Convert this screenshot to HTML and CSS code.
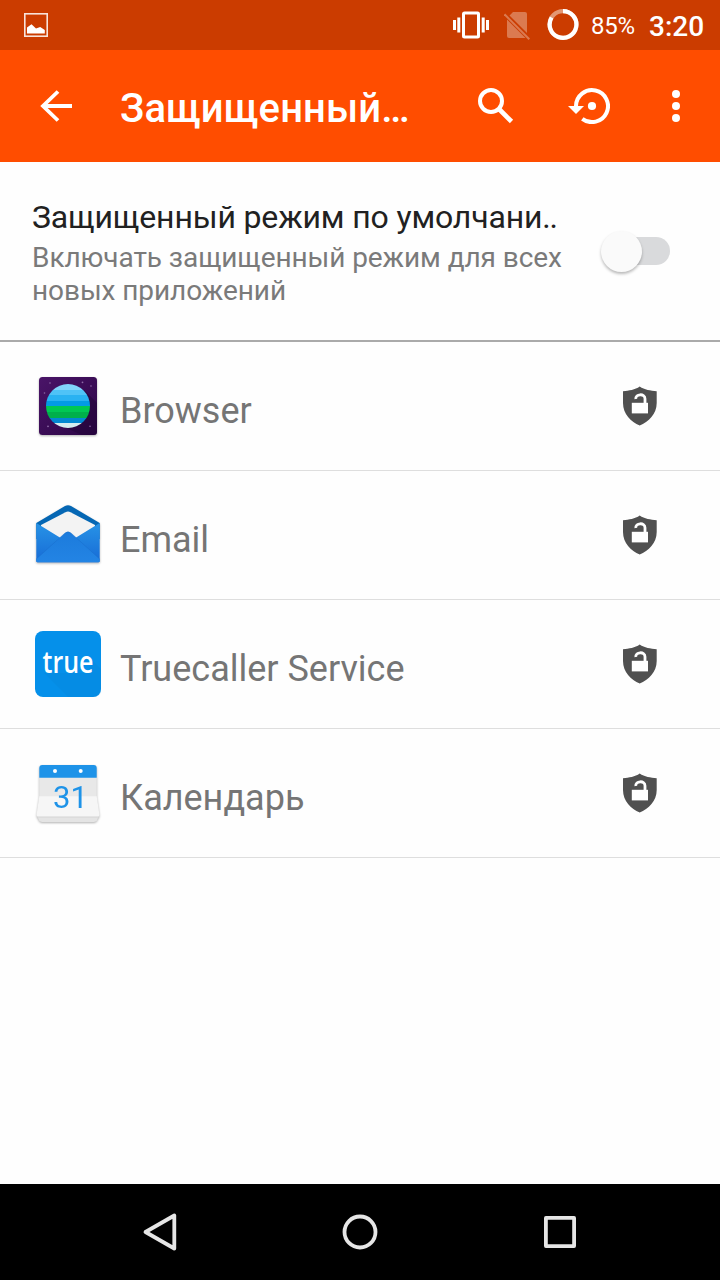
FILE: index.html
```
<!DOCTYPE html>
<html lang="ru">
<head>
    <meta charset="UTF-8">
    <meta name="viewport" content="width=device-width, initial-scale=1.0">
    <title>Защищенный режим</title>
    <link rel="stylesheet" href="styles.css">
</head>
<body>
    <!-- shield icon shared by all rows -->
    <svg class="defs" width="0" height="0">
        <symbol id="shield" viewBox="0 0 36 40">
            <path fill="#505050" d="M17.700 .6C22.500 4 28.500 4.800 34.700 5.200V17C34.700 28 26.500 36 17.700 39.400C9 36 1 28 1 17V5.200C7 4.800 13 4 17.700 .6Z"/>
            <rect x="9.800" y="16.800" width="16.200" height="10.600" fill="#fff"/>
            <path fill="none" stroke="#fff" stroke-width="2.800" d="M13.800 13C13 8 23 6.800 23 12.800V17"/>
        </symbol>
    </svg>

    <div class="screen">
        <div class="status-bar">
            <svg class="status-image" width="24" height="24" viewBox="0 0 24 24">
                <rect x=".8" y=".8" width="22.400" height="22.400" fill="none" stroke="#f8e3da" stroke-width="1.600"/>
                <path fill="#fff" d="M3 20.500V14.500L7.500 11.300L12 15.500L16.200 14L20.800 17V20.500Z"/>
            </svg>
            <svg class="status-vibrate" width="36" height="30" viewBox="0 0 36 30" fill="#fff">
                <rect x="10.500" y="3" width="15" height="24" rx="1" fill="none" stroke="#fff" stroke-width="3"/>
                <rect x="0" y="10" width="3" height="10"/>
                <rect x="4.300" y="7.500" width="3" height="15"/>
                <rect x="28.700" y="7.500" width="3" height="15"/>
                <rect x="33" y="10" width="3" height="10"/>
            </svg>
            <svg class="status-sim" width="26" height="30" viewBox="0 0 26 30">
                <path fill="#db7a50" d="M9 2H21Q23 2 23 4V23L5.500 5.500ZM3 9.500L21.500 28H5Q3 28 3 26Z"/>
                <path stroke="#db7a50" stroke-width="2" d="M.5 4.300L25.300 29.300"/>
            </svg>
            <svg class="status-battery" width="32" height="32" viewBox="0 0 32 32" fill="none" stroke-width="4.200">
                <circle cx="16" cy="15.500" r="13.400" stroke="#e39773"/>
                <path stroke="#fff" d="M16 2.100A13.400 13.400 0 1 1 4.600 8.500"/>
            </svg>
            <span class="battery-text">85%</span>
            <span class="clock">3:20</span>
        </div>

        <div class="toolbar">
            <svg class="back" width="32" height="36" viewBox="0 0 32 36" fill="none" stroke="#fff" stroke-width="4">
                <path d="M32 18H3M18 3.500L3 18L18 32.500" stroke-width="3.800"/>
            </svg>
            <h1>Защищенный…</h1>
            <svg class="search" width="36" height="36" viewBox="0 0 36 36" fill="none" stroke="#fff">
                <circle cx="13" cy="13" r="11" stroke-width="4"/>
                <path stroke-width="4.600" d="M21.500 21.500L33.500 33.500"/>
            </svg>
            <svg class="restore" width="42" height="36" viewBox="0 0 42 36">
                <path fill="none" stroke="#fff" stroke-width="4" d="M8 18A16 16 0 1 1 14.300 30.800"/>
                <path fill="#fff" d="M0 18H16L8 26Z"/>
                <circle cx="24" cy="18" r="4.100" fill="#fff"/>
            </svg>
            <svg class="more" width="8" height="36" viewBox="0 0 8 36" fill="#fff">
                <circle cx="4" cy="6" r="4"/>
                <circle cx="4" cy="18" r="4"/>
                <circle cx="4" cy="30" r="4"/>
            </svg>
        </div>

        <div class="setting">
            <div class="setting-text">
                <h2>Защищенный режим по умолчани<span class="dots">..</span></h2>
                <p>Включать защищенный режим для всех новых приложений</p>
            </div>
            <div class="switch"><div class="thumb"></div></div>
        </div>

        <ul class="app-list">
            <li>
                <svg class="app-icon" viewBox="0 0 72 72">
                    <defs>
                        <clipPath id="planet"><circle cx="36" cy="36" r="22"/></clipPath>
                        <linearGradient id="sky" x1="0" y1="0" x2="1" y2="1">
                            <stop offset="0" stop-color="#4a1468"/>
                            <stop offset="1" stop-color="#2c0645"/>
                        </linearGradient>
                    </defs>
                    <rect x="7" y="7" width="58" height="58" rx="3.500" fill="url(#sky)"/>
                    <path fill="#23053a" opacity=".6" d="M52 20L65 33V62Q65 65 62 65H50L21 52Z"/>
                    <g clip-path="url(#planet)">
                        <rect x="14" y="14" width="44" height="6" fill="#81d4fa"/>
                        <rect x="14" y="20" width="44" height="5" fill="#4fc3f7"/>
                        <rect x="14" y="25" width="44" height="6" fill="#29b2f2"/>
                        <rect x="14" y="31" width="44" height="5" fill="#039be5"/>
                        <rect x="14" y="36" width="44" height="6" fill="#00c853"/>
                        <rect x="14" y="42" width="44" height="6" fill="#00b04a"/>
                        <rect x="14" y="48" width="44" height="5" fill="#0288d1"/>
                        <rect x="14" y="53" width="44" height="5" fill="#d3ecef"/>
                    </g>
                    <g fill="#8d6aa6">
                        <circle cx="18" cy="13" r=".8"/>
                        <circle cx="50.500" cy="12.300" r=".9"/>
                        <circle cx="59" cy="16" r=".8"/>
                        <circle cx="12.500" cy="23" r=".8"/>
                        <circle cx="16" cy="56.300" r=".9"/>
                        <circle cx="58" cy="56.300" r=".8"/>
                    </g>
                </svg>
                <span class="app-name">Browser</span>
                <svg class="shield"><use href="#shield"/></svg>
            </li>
            <li>
                <svg class="app-icon" viewBox="0 0 72 72">
                    <defs>
                        <linearGradient id="envelope" x1="0" y1="0" x2="0" y2="1">
                            <stop offset="0" stop-color="#2793e6"/>
                            <stop offset="1" stop-color="#176bd6"/>
                        </linearGradient>
                        <linearGradient id="flap" x1="0" y1="0" x2="0" y2="1">
                            <stop offset="0" stop-color="#1c7bdc"/>
                            <stop offset="1" stop-color="#2384e4"/>
                        </linearGradient>
                    </defs>
                    <path fill="#0567b4" d="M4.300 24L33 7Q36 5.300 39 7L67.700 24V40H4.300Z"/>
                    <path fill="#f3f3f3" d="M9 26L33.500 13.200Q36 12 38.500 13.200L63 26V45H9Z"/>
                    <path fill="url(#envelope)" d="M4.300 24L36 43.500L67.700 24V62Q67.700 63.300 66.400 63.300H5.600Q4.300 63.300 4.300 62Z"/>
                    <path fill="url(#flap)" d="M4.300 60L33 34Q36 31.500 39 34L67.700 60V62Q67.700 63.300 66.400 63.300H5.600Q4.300 63.300 4.300 62Z"/>
                    <path fill="none" stroke="#1769c8" stroke-width=".4" d="M4.300 60L33 34Q36 31.500 39 34L67.700 60"/>
                </svg>
                <span class="app-name">Email</span>
                <svg class="shield"><use href="#shield"/></svg>
            </li>
            <li>
                <svg class="app-icon flat" viewBox="0 0 72 72">
                    <rect x="3" y="3" width="66" height="66" rx="8" fill="#0590ea"/>
                    <path fill="#0787db" d="M61 33L69 41V61Q69 69 61 69H36L12 45H55Z" opacity=".35"/>
                    <text class="true-text" x="10.500" y="44.500" textLength="51" lengthAdjust="spacingAndGlyphs">true</text>
                </svg>
                <span class="app-name">Truecaller Service</span>
                <svg class="shield"><use href="#shield"/></svg>
            </li>
            <li>
                <svg class="app-icon" viewBox="0 0 72 72">
                    <path fill="#e4e4e4" d="M5 59H67L65 63.300Q64 65 62 65H10Q8 65 7 63.300Z"/>
                    <rect x="7.300" y="20" width="57.400" height="20" fill="#e8e8e8"/>
                    <path fill="#f6f6f6" d="M7.300 39.300H64.700L67.500 58Q67.500 59.700 66 59.700H6Q4.500 59.700 4.500 58Z"/>
                    <path fill="none" stroke="#cfcfcf" stroke-width=".7" d="M5 60H67"/>
                    <path fill="#1e93e8" d="M7.300 20.700V11Q7.300 8 10.300 8H61.700Q64.700 8 64.700 11V20.700Z"/>
                    <circle cx="23" cy="14" r="2" fill="#fff"/>
                    <circle cx="48.700" cy="14" r="2" fill="#fff"/>
                    <text class="day-text" x="21" y="50.500">31</text>
                </svg>
                <span class="app-name">Календарь</span>
                <svg class="shield"><use href="#shield"/></svg>
            </li>
        </ul>

        <div class="nav-bar">
            <svg width="40" height="40" viewBox="0 0 40 40"><path d="M34.300 3.500V36.500L5.500 20Z"/></svg>
            <svg width="40" height="40" viewBox="0 0 40 40"><circle cx="20" cy="20" r="15.500"/></svg>
            <svg width="40" height="40" viewBox="0 0 40 40"><rect x="5.900" y="5.900" width="28.200" height="28.200"/></svg>
        </div>
    </div>
</body>
</html>
```

FILE: styles.css
```
* {
    box-sizing: border-box;
}

body {
    font-family: Roboto, "Noto Sans", sans-serif;
    background-color: #fefefe;
    margin: 0;
}

h1, h2, p, ul {
    margin: 0;
    padding: 0;
}

svg {
    display: block;
    flex-shrink: 0;
}

.defs {
    position: absolute;
}

.screen {
    display: flex;
    flex-direction: column;
    width: 720px;
    height: 1280px;
    overflow: hidden;
}

/* Status bar */
.status-bar {
    display: flex;
    align-items: center;
    height: 50px;
    padding: 0 15px 0 24px;
    background-color: #cb3c00;
    color: #fff;
}

.status-image {
    margin-right: auto;
}

.status-sim {
    margin-left: 15px;
}

.status-battery {
    margin-left: 17px;
}

.battery-text {
    width: 45px;
    margin-left: 12px;
    padding-top: 2px;
    font-size: 24px;
    letter-spacing: -0.3px;
    white-space: nowrap;
}

.clock {
    width: 56px;
    margin-left: 13px;
    padding-top: 2px;
    font-size: 28px;
    font-weight: 500;
    white-space: nowrap;
}

/* Toolbar */
.toolbar {
    display: flex;
    align-items: center;
    height: 112px;
    padding: 0 40px;
    background-color: #ff4d00;
}

.toolbar h1 {
    width: 310px;
    margin-left: 48px;
    padding-top: 4px;
    color: #fff;
    font-size: 40px;
    font-weight: 500;
    letter-spacing: 0.1px;
    white-space: nowrap;
}

.search {
    margin-left: 48px;
}

.restore {
    margin-left: 54px;
}

.more {
    margin-left: auto;
}

/* Default mode setting */
.setting {
    display: flex;
    justify-content: space-between;
    height: 180px;
    padding: 36px 50px 0 32px;
    border-bottom: 2px solid #aaa;
}

.setting-text {
    width: 550px;
}

.setting h2 {
    color: #212121;
    font-size: 32px;
    font-weight: 400;
    line-height: 38px;
    letter-spacing: -0.15px;
    white-space: nowrap;
}

.setting h2 .dots {
    letter-spacing: -1.2px;
}

.setting p {
    margin-top: 5px;
    color: #7a7a7a;
    font-size: 28px;
    line-height: 33px;
    letter-spacing: -0.07px;
}

.switch {
    display: flex;
    align-items: center;
    width: 60px;
    height: 28px;
    margin-top: 39px;
    border-radius: 14px;
    background-color: #d9dadc;
}

.thumb {
    flex-shrink: 0;
    width: 41px;
    height: 41px;
    margin-left: -9px;
    border-radius: 50%;
    background-color: #fafafa;
    box-shadow: 0 2px 3px rgba(0, 0, 0, 0.27);
}

/* App list */
.app-list {
    flex: 1;
    list-style: none;
}

.app-list li {
    display: flex;
    align-items: center;
    height: 129px;
    padding: 0 62px 0 32px;
    border-bottom: 1px solid #dedede;
}

.app-icon {
    width: 72px;
    height: 72px;
    filter: drop-shadow(0 1px 1px rgba(0, 0, 0, 0.3));
}

.app-icon.flat {
    filter: none;
}

.app-name {
    margin-left: 16px;
    padding-top: 9px;
    color: #757575;
    font-size: 36px;
}

.shield {
    width: 36px;
    height: 40px;
    margin-left: auto;
}

.true-text {
    fill: #fff;
    font-family: "Open Sans", sans-serif;
    font-size: 30px;
    font-weight: 600;
}

.day-text {
    fill: #1e93e8;
    font-size: 31px;
}

/* Navigation bar */
.nav-bar {
    display: flex;
    align-items: center;
    justify-content: space-between;
    height: 96px;
    padding: 0 140px;
    background-color: #000;
}

.nav-bar svg {
    fill: none;
    stroke: #e6e6e6;
    stroke-width: 3.8;
    stroke-linejoin: round;
}
```
